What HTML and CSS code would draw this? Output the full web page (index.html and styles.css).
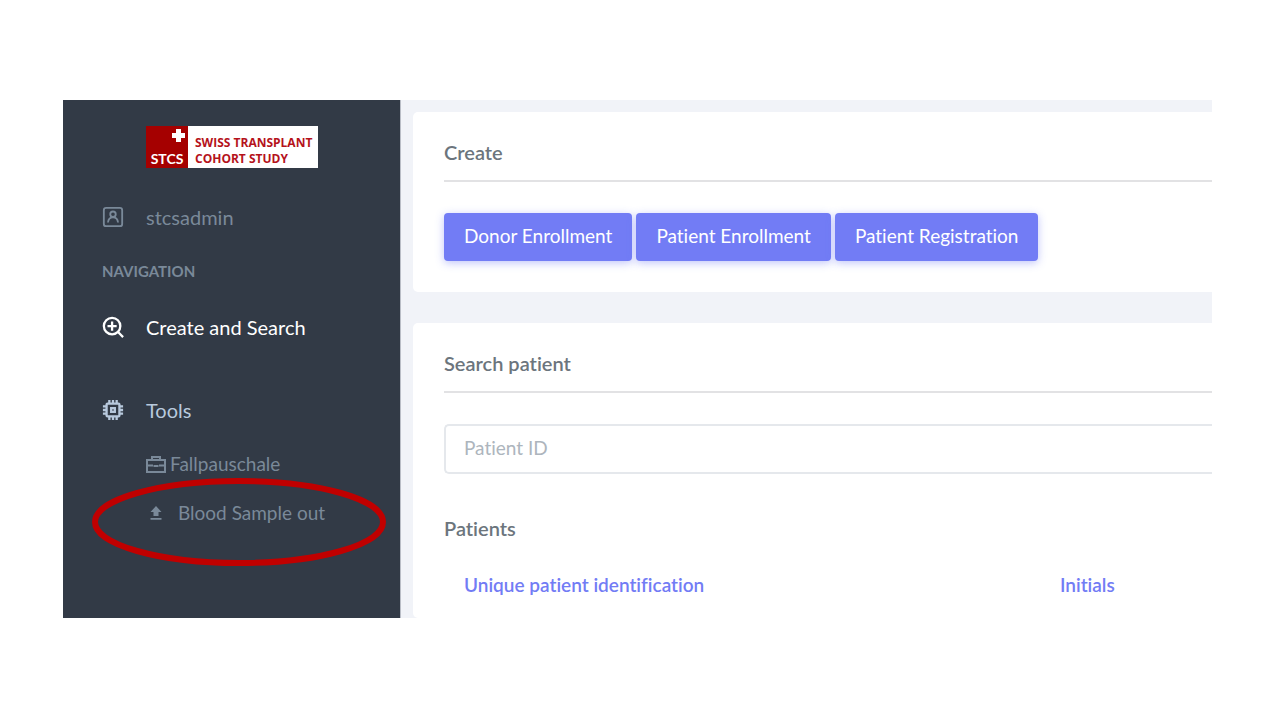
FILE: index.html
```html
<!DOCTYPE html>
<html lang="en">
<head>
<meta charset="utf-8">
<title>Swiss Transplant Cohort Study</title>
<link rel="stylesheet" href="styles.css">
</head>
<body>
<div class="app">
  <aside class="sidebar">
    <div class="logo">
      <div class="logo-mark">
        <svg class="logo-cross" viewBox="0 0 13 13" aria-hidden="true"><path d="M4 0h5v4h4v5H9v4H4V9H0V4h4z"/></svg>
        <span>STCS</span>
      </div>
      <div class="logo-name">SWISS TRANSPLANT<br>COHORT STUDY</div>
    </div>
    <a class="row user" href="#">
      <svg class="icon" viewBox="0 0 24 24" aria-hidden="true"><rect x="2" y="2" width="20" height="20" rx="2.5"/><circle cx="12" cy="9" r="3"/><path d="M6.500 18c.4-3.700 2.500-5.600 5.500-5.600s5.100 1.900 5.500 5.600"/></svg>
      <span>stcsadmin</span>
    </a>
    <h2 class="nav-title">NAVIGATION</h2>
    <nav>
      <a class="row active" href="#">
        <svg class="icon thick" viewBox="0 0 24 24" aria-hidden="true"><circle cx="11" cy="11" r="9"/><path d="M11 6v10M6 11h10M17.500 17.500l5.500 5.500"/></svg>
        <span>Create and Search</span>
      </a>
      <a class="row tools" href="#">
        <svg class="icon thick" viewBox="0 0 24 24" aria-hidden="true"><rect x="5" y="5" width="14" height="14" rx="1"/><rect x="10" y="10" width="4" height="4"/><path d="M8 1v4M12 1v4M16 1v4M8 19v4M12 19v4M16 19v4M1 8h4M1 12h4M1 16h4M19 8h4M19 12h4M19 16h4"/></svg>
        <span>Tools</span>
      </a>
      <ul class="subnav">
        <li><a class="subrow" href="#">
          <svg class="case" viewBox="0 0 20 17" aria-hidden="true"><path d="M1 4h18v12H1zM6 4V1h8v3M1 9.500h6M13 9.500h6M7.500 10h5"/></svg>
          <span>Fallpauschale</span>
        </a></li>
        <li class="marked"><a class="subrow upload-row" href="#">
          <svg class="upload" viewBox="0 0 12 14" aria-hidden="true"><path d="M6 0l5.500 6H8.500v4h-5V6H.5zM.5 12h11v1.700H.5z"/></svg>
          <span>Blood Sample out</span>
        </a>
        <svg class="ellipse" viewBox="0 0 294 90" aria-hidden="true"><ellipse cx="147" cy="45" rx="144" ry="41"/></svg></li>
      </ul>
    </nav>
  </aside>
  <main class="content">
    <section class="card">
      <h3 class="title">Create</h3>
      <hr class="rule">
      <div class="buttons">
        <button class="btn" type="button">Donor Enrollment</button>
        <button class="btn" type="button">Patient Enrollment</button>
        <button class="btn" type="button">Patient Registration</button>
      </div>
    </section>
    <section class="card search">
      <h3 class="title"><label for="pid">Search patient</label></h3>
      <hr class="rule">
      <input class="field" id="pid" type="text" placeholder="Patient ID">
      <h3 class="title patients">Patients</h3>
      <table class="table">
        <thead><tr><th class="wide" scope="col">Unique patient identification</th><th scope="col">Initials</th></tr></thead>
      </table>
    </section>
  </main>
</div>
</body>
</html>
```
FILE: styles.css
```css
* { box-sizing: border-box; }
body {
  margin: 0;
  padding: 100px 68px 102px 63px;
  background: #fff;
  font-family: Lato, "Open Sans", sans-serif;
  font-size: 20px;
  font-variant-ligatures: none;
  line-height: 24px;
  color: #6c757d;
}
a { color: inherit; text-decoration: none; }
.app { display: grid; grid-template-columns: 337px 1fr; overflow: hidden; background: #f1f3f8; }
.sidebar { padding: 26px 14px 32px 39px; background: #323a46; color: #7a8999; box-shadow: 1px 0 0 #b9bdc6; }
.logo { display: flex; width: 172px; height: 42px; margin-left: 44px; background: #fff; overflow: hidden; }
.logo-mark {
  display: flex; flex: none; flex-direction: column; justify-content: space-between; align-items: center;
  width: 42px; padding: 3px 0 1px; background: #a50000; color: #fff;
  font-size: 14px; font-weight: 700; line-height: 16px;
}
.logo-cross { width: 13px; height: 13px; margin-right: 3px; align-self: flex-end; fill: #fff; }
.logo-name {
  padding: 9px 0 0 7px; color: #b5121b;
  font-family: "Open Sans", sans-serif; font-size: 12px; font-weight: 700; line-height: 16px; white-space: nowrap;
}
.row { display: flex; align-items: center; gap: 22px; height: 38px; padding-bottom: 0; }
.icon { width: 22px; height: 22px; fill: none; stroke: currentColor; stroke-width: 2; }
.thick { stroke-width: 2.500; }
.user { margin-top: 30px; }
.nav-title { margin: 25px 0 27px; font-size: 15px; line-height: 20px; font-weight: 700; }
.active { color: #fff; }
.tools { margin-top: 45px; color: #b8c9dd; }
.subnav { list-style: none; margin: 15px 0 0; padding: 0 0 0 44px; font-size: 19px; display: grid; gap: 9px; }
.subrow { display: flex; align-items: center; gap: 4px; height: 40px; }
.case { width: 20px; height: 17px; fill: none; stroke: currentColor; stroke-width: 2; }
.upload { width: 12px; height: 14px; fill: currentColor; }
.upload-row { gap: 16px; padding-left: 4px; }
.marked { position: relative; }
.ellipse { position: absolute; left: -54px; top: -16px; width: 294px; height: 90px; fill: none; stroke: #c00000; stroke-width: 6; pointer-events: none; }
.content { display: grid; align-content: start; gap: 31px; min-width: 0; padding: 12px 0 0 13px; }
.card { padding: 28px 0 31px 31px; background: #fff; border-radius: 5px 0 0 5px; }
.title { margin: 0; font-size: 20px; line-height: 24px; font-weight: 600; }
.rule { margin: 16px 0 31px; border: 0; border-top: 2px solid #e2e2e4; }
.buttons { display: flex; gap: 4px; }
.btn {
  height: 48px; padding: 0 20px 2px; border: 0; border-radius: 4px;
  background: #727cf5; color: #fff; font: inherit; font-size: 19px; white-space: nowrap;
  box-shadow: 0 2px 8px rgba(114, 124, 245, .45);
}
.search { padding-bottom: 21px; }
.field {
  display: block; width: 100%; height: 50px; padding: 0 18px 4px;
  border: 2px solid #e5e8ec; border-right: 0; border-radius: 5px 0 0 5px;
  background: #fff; color: #6c757d; font: inherit; font-size: 19px;
}
.field::placeholder { color: #adb5bd; opacity: 1; }
.patients { margin-top: 42px; }
.table { width: 100%; margin-top: 33px; border-collapse: collapse; table-layout: fixed; }
.table th { padding: 0 20px; text-align: left; color: #727cf5; font-size: 19px; font-weight: 600; }
.table .wide { width: 77.6%; }
```
